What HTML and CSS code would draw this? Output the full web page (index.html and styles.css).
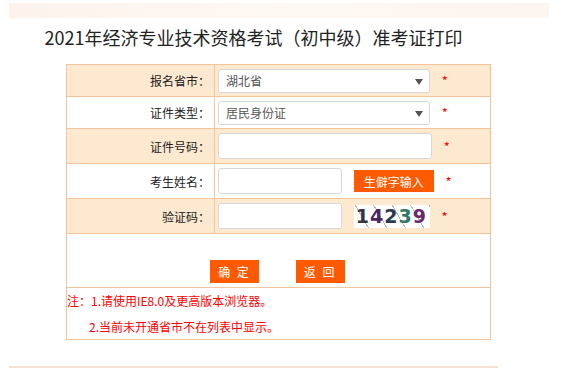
FILE: index.html
```html
<!DOCTYPE html>
<html>
<head>
  <meta charset="utf-8">
  <title>准考证打印</title>
  <link rel="stylesheet" href="styles.css">
</head>
<body>
  <div class="page">
    <div class="top-band"></div>
    <h1 class="title">2021年经济专业技术资格考试（初中级）准考证打印</h1>

    <table class="form-table">
      <tr class="odd">
        <td class="label">报名省市：</td>
        <td class="field">
          <div class="select"><span class="sel-text">湖北省</span><span class="arrow"></span></div>
          <span class="req">*</span>
        </td>
      </tr>
      <tr>
        <td class="label">证件类型：</td>
        <td class="field">
          <div class="select"><span class="sel-text">居民身份证</span><span class="arrow"></span></div>
          <span class="req">*</span>
        </td>
      </tr>
      <tr class="odd tall">
        <td class="label">证件号码：</td>
        <td class="field">
          <input class="input wide" type="text">
          <span class="req">*</span>
        </td>
      </tr>
      <tr class="tall">
        <td class="label">考生姓名：</td>
        <td class="field">
          <input class="input short" type="text">
          <button class="btn rare">生僻字输入</button>
          <span class="req">*</span>
        </td>
      </tr>
      <tr class="odd tall">
        <td class="label">验证码：</td>
        <td class="field">
          <input class="input short" type="text">
          <div class="captcha">
            <span class="c1">1</span><span class="c2">4</span><span class="c3">2</span><span class="c4">3</span><span class="c5">9</span>
          </div>
          <span class="req">*</span>
        </td>
      </tr>
      <tr class="actions">
        <td colspan="2">
          <button class="btn action">确 定</button>
          <button class="btn action">返 回</button>
        </td>
      </tr>
      <tr class="notes">
        <td colspan="2">
          <p>注：1.请使用IE8.0及更高版本浏览器。</p>
          <p class="indent">2.当前未开通省市不在列表中显示。</p>
        </td>
      </tr>
    </table>

    <div class="bottom-line"></div>
  </div>
</body>
</html>
```

FILE: styles.css
```css
body {
  margin: 0;
  background: #fff;
  font-family: "Noto Sans CJK SC", "Noto Sans", sans-serif;
  color: #333;
}

.page {
  width: 489px;
  margin-left: 9px;
  padding-top: 3px;
}

.top-band {
  height: 15px;
  width: 540px;
  background: linear-gradient(to right, #fdf3ec, #fef8f3 50%, #fdf5ef);
}

.title {
  margin: 4px 0 0;
  height: 30px;
  line-height: 30px;
  font-size: 18px;
  font-weight: normal;
  color: #222;
  text-align: center;
}

/* 表单 */
.form-table {
  margin: 12px 0 0 57px;
  width: 425px;
  border-collapse: collapse;
  font-size: 12px;
}

.form-table td {
  border: 1px solid #f3c39c;
  padding: 0;
}

.form-table tr {
  height: 32px;
}

.form-table tr.tall {
  height: 35px;
}

.form-table tr.odd td {
  background: #fde8d0;
}

.label {
  width: 143px;
  text-align: right;
  padding-right: 4px !important;
  color: #222;
}

.field {
  padding-left: 3px !important;
  white-space: nowrap;
}

.field > * {
  vertical-align: middle;
}

.select {
  display: inline-block;
  box-sizing: border-box;
  width: 212px;
  height: 24px;
  border: 1px solid #d8d8d8;
  border-radius: 3px;
  background: #fff;
  position: relative;
}

.sel-text {
  display: block;
  line-height: 22px;
  padding-left: 7px;
  color: #555;
}

.arrow {
  position: absolute;
  right: 6px;
  top: 9px;
  border-left: 4px solid transparent;
  border-right: 4px solid transparent;
  border-top: 6px solid #555;
}

.input {
  box-sizing: border-box;
  height: 26px;
  border: 1px solid #d8d8d8;
  border-radius: 3px;
  background: #fff;
  margin: 0;
}

.input.wide {
  width: 214px;
}

.input.short {
  width: 124px;
}

.req {
  display: inline-block;
  color: #f00;
  font-size: 13px;
  margin-left: 9px;
}

.btn {
  border: none;
  background: #ff5a00;
  color: #fff;
  font-family: "Noto Sans CJK SC", sans-serif;
  font-size: 12px;
  padding: 0;
  cursor: pointer;
}

.rare {
  width: 80px;
  height: 22px;
  margin-left: 9px;
}

.captcha {
  display: inline-block;
  width: 76px;
  height: 23px;
  margin-left: 9px;
  background: repeating-linear-gradient(60deg, #fff 0 12px, #bbb 12px 13px, #fff 13px 16px);
  font: bold 19px/23px "DejaVu Sans", sans-serif;
  letter-spacing: 1px;
  padding-left: 2px;
  box-sizing: border-box;
}

.c1 { color: #334; }
.c2 { color: #4a2566; }
.c3 { color: #2a3a55; }
.c4 { color: #2e7a66; }
.c5 { color: #6a2a6a; }

.actions {
  height: 54px !important;
}

.actions td {
  padding-left: 143px !important;
  vertical-align: bottom;
  padding-bottom: 4px !important;
}

.action {
  width: 49px;
  height: 23px;
  margin-right: 34px;
  letter-spacing: 2px;
}

.notes td {
  height: 51px;
  vertical-align: top;
  color: #f00;
  font-family: "Noto Sans CJK SC", serif;
}

.notes p {
  margin: 4px 0 0;
  line-height: 17px;
}

.notes p.indent {
  margin-top: 9px;
  padding-left: 22px;
}

.bottom-line {
  margin-top: 26px;
  height: 2px;
  background: #f6e0d0;
}
```
